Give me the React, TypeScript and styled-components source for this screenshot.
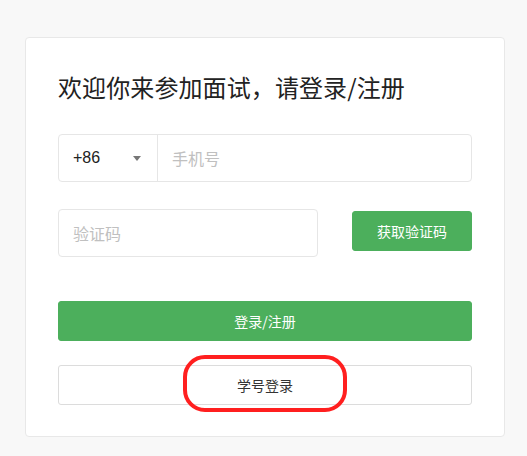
import React from "react";
import styled, { createGlobalStyle } from "styled-components";

const GlobalStyle = createGlobalStyle`
  html, body { margin: 0; padding: 0; background: #f8f8f8; }
  body { font-family: "Liberation Sans", "Noto Sans CJK SC", sans-serif; }
  * { box-sizing: border-box; }
`;

const Page = styled.div`
  padding: 37px 0 0 25px;
  min-height: 456px;
`;

const Card = styled.div`
  width: 480px;
  background: #fff;
  border: 1px solid #e8e8e8;
  border-radius: 4px;
  padding: 31px 32px 31px 32px;
  display: flex;
  flex-direction: column;
`;

const Title = styled.h1`
  margin: 0;
  font-family: "Noto Sans CJK SC", sans-serif;
  font-size: 24px;
  font-weight: 400;
  line-height: 36px;
  color: #222;
  letter-spacing: 0.1px;
`;

const PhoneGroup = styled.div`
  margin-top: 29px;
  height: 48px;
  display: flex;
  border: 1px solid #e6e6e6;
  border-radius: 4px;
`;

const CountrySelect = styled.div`
  width: 99px;
  display: flex;
  align-items: center;
  justify-content: space-between;
  padding: 0 16px 0 14px;
  border-right: 1px solid #e6e6e6;
  font-size: 16px;
  color: #222;
`;

const Caret = styled.span`
  width: 0;
  height: 0;
  border-left: 4.5px solid transparent;
  border-right: 4.5px solid transparent;
  border-top: 5px solid #777;
  margin-top: 1px;
`;

const Input = styled.input<{ $width?: string }>`
  border: none;
  outline: none;
  background: transparent;
  font-family: "Noto Sans CJK SC", sans-serif;
  font-size: 16px;
  color: #222;
  padding: 0 14px;
  flex: 1;
  min-width: 0;
  &::placeholder { color: #c0c0c0; }
`;

const CodeRow = styled.div`
  margin-top: 27px;
  display: flex;
  align-items: center;
  justify-content: space-between;
`;

const CodeBox = styled.div`
  width: 260px;
  height: 48px;
  display: flex;
  border: 1px solid #e6e6e6;
  border-radius: 4px;
`;

const Button = styled.button<{ $variant?: "primary" | "outline" }>`
  font-family: "Noto Sans CJK SC", sans-serif;
  font-size: 14px;
  height: 40px;
  border-radius: 3px;
  cursor: pointer;
  border: 1px solid ${(p) => (p.$variant === "outline" ? "#dcdcdc" : "#4caf5c")};
  background: ${(p) => (p.$variant === "outline" ? "#fff" : "#4caf5c")};
  color: ${(p) => (p.$variant === "outline" ? "#333" : "#fff")};
  padding: 0;
`;

const SendButton = styled(Button)`
  width: 120px;
  margin-top: -4px;
`;

const SubmitButton = styled(Button)`
  width: 100%;
  margin-top: 44px;
`;

const StudentWrap = styled.div`
  position: relative;
  margin-top: 24px;
`;

const StudentButton = styled(Button)`
  width: 100%;
  display: block;
`;

const Annotation = styled.div`
  position: absolute;
  left: 125px;
  top: -10px;
  width: 164px;
  height: 57px;
  border: 4px solid #ff1f1f;
  border-radius: 22px;
  pointer-events: none;
`;

export default function App() {
  return (
    <>
      <GlobalStyle />
      <Page>
        <Card>
          <Title>欢迎你来参加面试，请登录/注册</Title>
          <PhoneGroup>
            <CountrySelect>
              <span>+86</span>
              <Caret />
            </CountrySelect>
            <Input placeholder="手机号" />
          </PhoneGroup>
          <CodeRow>
            <CodeBox>
              <Input placeholder="验证码" />
            </CodeBox>
            <SendButton>获取验证码</SendButton>
          </CodeRow>
          <SubmitButton>登录/注册</SubmitButton>
          <StudentWrap>
            <StudentButton $variant="outline">学号登录</StudentButton>
            <Annotation />
          </StudentWrap>
        </Card>
      </Page>
    </>
  );
}
